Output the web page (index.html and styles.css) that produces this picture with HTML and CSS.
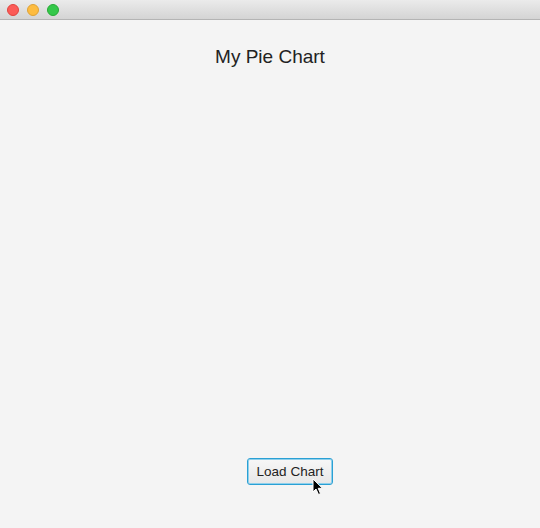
FILE: index.html
```html
<!DOCTYPE html>
<html>
<head>
<meta charset="utf-8">
<link rel="stylesheet" href="styles.css">
</head>
<body>
<div class="window">
  <div class="titlebar">
    <span class="light red"></span>
    <span class="light yellow"></span>
    <span class="light green"></span>
  </div>
  <div class="content">
    <h1 class="chart-title">My Pie Chart</h1>
    <div class="chart-area"></div>
    <div class="actions">
      <button class="btn">Load Chart
        <svg class="cursor" width="12" height="18" viewBox="0 0 12 18">
          <path d="M1 1 L1 14 L4 11 L6.5 16.5 L8.5 15.6 L6.2 10.3 L10.5 10.3 Z" fill="#000" stroke="#fff" stroke-width="1"/>
        </svg>
      </button>
    </div>
  </div>
</div>
</body>
</html>
```
FILE: styles.css
```css
html, body {
  margin: 0;
  padding: 0;
}
body {
  width: 540px;
  height: 528px;
  overflow: hidden;
  background: #f4f4f4;
  font-family: "Liberation Sans", Arial, sans-serif;
}
.window {
  display: flex;
  flex-direction: column;
  height: 528px;
}
.titlebar {
  height: 20px;
  box-sizing: border-box;
  background: linear-gradient(#ebebeb, #d4d4d4);
  border-bottom: 1px solid #b4b4b4;
  display: flex;
  align-items: center;
  gap: 8px;
  padding-left: 7px;
}
.light {
  width: 12px;
  height: 12px;
  border-radius: 50%;
  box-sizing: border-box;
}
.red { background: #fc5b57; border: 1px solid #e0443e; }
.yellow { background: #fdbc40; border: 1px solid #dea236; }
.green { background: #34c84a; border: 1px solid #27aa35; }
.content {
  flex: 1;
  display: flex;
  flex-direction: column;
  align-items: center;
}
.chart-title {
  margin: 25px 0 0;
  font-size: 19px;
  font-weight: 400;
  color: #222;
  line-height: 24px;
}
.chart-area {
  flex: 1;
}
.actions {
  margin-bottom: 43px;
  padding-left: 40px;
}
.btn {
  position: relative;
  height: 27px;
  width: 86px;
  border: 1px solid #2aa0d4;
  border-radius: 3px;
  box-shadow: 0 0 0 1px #8fd0ec inset;
  background: linear-gradient(#f7f7f7, #e7e7e7);
  font-family: "Liberation Sans", Arial, sans-serif;
  font-size: 13.5px;
  color: #222;
  padding: 0;
}
.cursor {
  position: absolute;
  left: 64px;
  top: 19px;
}
```
